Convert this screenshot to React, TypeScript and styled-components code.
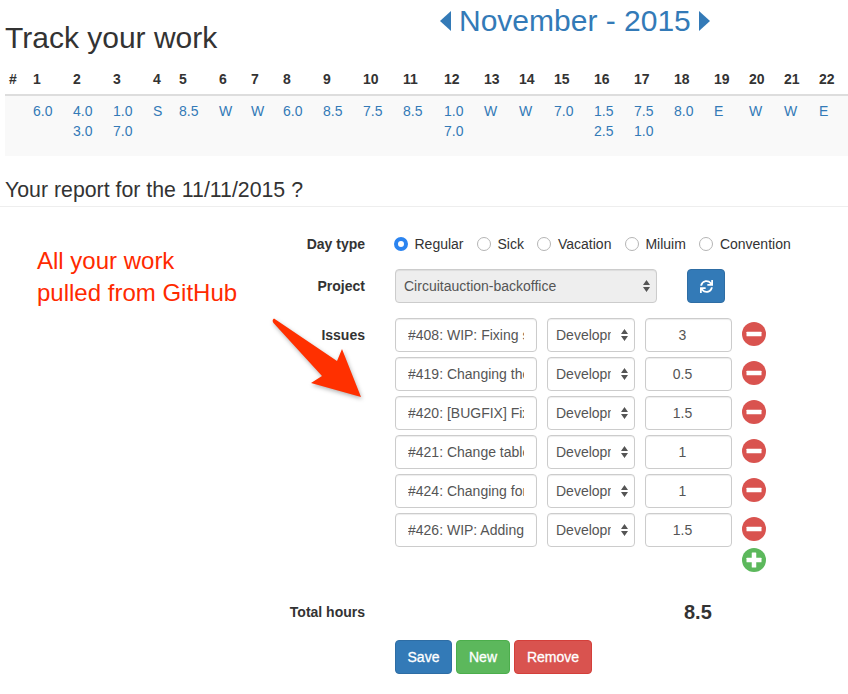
import React from 'react';
import styled, { createGlobalStyle } from 'styled-components';
import { FaSync } from 'react-icons/fa';

const GlobalStyle = createGlobalStyle`
   html, body {
      margin: 0;
      padding: 0;
      background: #fff;
      overflow: hidden;
   }
   body {
      font-family: "Liberation Sans", Arial, sans-serif;
      font-size: 14px;
      line-height: 20px;
      color: #333;
   }
   * { box-sizing: border-box; }
`;

const days = [
   { n: '1', w: 40, v: ['6.0'] },
   { n: '2', w: 40, v: ['4.0', '3.0'] },
   { n: '3', w: 40, v: ['1.0', '7.0'] },
   { n: '4', w: 26, v: ['S'] },
   { n: '5', w: 40, v: ['8.5'] },
   { n: '6', w: 32, v: ['W'] },
   { n: '7', w: 32, v: ['W'] },
   { n: '8', w: 40, v: ['6.0'] },
   { n: '9', w: 40, v: ['8.5'] },
   { n: '10', w: 40, v: ['7.5'] },
   { n: '11', w: 41, v: ['8.5'] },
   { n: '12', w: 40, v: ['1.0', '7.0'] },
   { n: '13', w: 35, v: ['W'] },
   { n: '14', w: 35, v: ['W'] },
   { n: '15', w: 40, v: ['7.0'] },
   { n: '16', w: 40, v: ['1.5', '2.5'] },
   { n: '17', w: 40, v: ['7.5', '1.0'] },
   { n: '18', w: 40, v: ['8.0'] },
   { n: '19', w: 35, v: ['E'] },
   { n: '20', w: 35, v: ['W'] },
   { n: '21', w: 35, v: ['W'] },
   { n: '22', w: 35, v: ['E'] },
];

const dayTypes = ['Regular', 'Sick', 'Vacation', 'Miluim', 'Convention'];

const issues = [
   { title: '#408: WIP: Fixing some of the tests', hours: '3' },
   { title: '#419: Changing the filters', hours: '0.5' },
   { title: '#420: [BUGFIX] Fix the item page', hours: '1.5' },
   { title: '#421: Change table layout', hours: '1' },
   { title: '#424: Changing form labels', hours: '1' },
   { title: '#426: WIP: Adding new report', hours: '1.5' },
];

const carets = encodeURIComponent(
   '<svg xmlns="http://www.w3.org/2000/svg" width="7" height="12"><path d="M3.5 0L7 5H0zM3.5 12L0 7h7z" fill="#555"/></svg>'
);

export default function App() {
   return (
      <Page>
         <GlobalStyle />
         <TitleRow>
            <Title>Track your work</Title>
            <Month>
               <Triangle viewBox="0 0 11 20"><path d="M11 0v20L0 10z" /></Triangle>
               <span>November - 2015</span>
               <Triangle viewBox="0 0 11 20"><path d="M0 0v20l11-10z" /></Triangle>
            </Month>
         </TitleRow>

         <Calendar>
            <colgroup>
               <col width={24} />
               {days.map((d) => <col key={d.n} width={d.w} />)}
            </colgroup>
            <thead>
               <tr>
                  <HeadCell>#</HeadCell>
                  {days.map((d) => <HeadCell key={d.n}>{d.n}</HeadCell>)}
               </tr>
            </thead>
            <tbody>
               <tr>
                  <DataCell />
                  {days.map((d) => (
                     <DataCell key={d.n}>
                        {d.v.map((v) => <DayLink key={v}>{v}</DayLink>)}
                     </DataCell>
                  ))}
               </tr>
            </tbody>
         </Calendar>

         <ReportTitle>Your report for the 11/11/2015 ?</ReportTitle>

         <Form>
            <Note>All your work<br />pulled from GitHub</Note>
            <Arrow viewBox="0 0 110 100">
               <path d="M3 3.5L66 46 L71 34 L90 82 L40 68 L51 61 L2.5 8 Q0.5 5 3 3.5Z" />
            </Arrow>

            <DayRow>
               <Label>Day type</Label>
               <Radios>
                  {dayTypes.map((t, i) => (
                     <RadioLabel key={t}>
                        <Radio type="radio" name="dayType" defaultChecked={i === 0} />
                        {t}
                     </RadioLabel>
                  ))}
               </Radios>
            </DayRow>

            <ProjectRow>
               <Label>Project</Label>
               <ProjectSelect disabled defaultValue="backoffice">
                  <option value="backoffice">Circuitauction-backoffice</option>
               </ProjectSelect>
               <RefreshButton type="button"><FaSync size={13} /></RefreshButton>
            </ProjectRow>

            <IssuesRow>
               <IssuesLabel>Issues</IssuesLabel>
               <IssueList>
                  {issues.map((issue) => (
                     <IssueRow key={issue.title}>
                        <TitleInput defaultValue={issue.title} />
                        <TypeSelect defaultValue="dev">
                           <option value="dev">Development</option>
                        </TypeSelect>
                        <HoursInput defaultValue={issue.hours} />
                        <RoundIcon viewBox="0 0 24 24" $color="#d9534f">
                           <circle cx="12" cy="12" r="12" />
                           <rect x="4.5" y="9.75" width="15" height="4.5" rx="0.6" fill="#fff" />
                        </RoundIcon>
                     </IssueRow>
                  ))}
                  <AddRow>
                     <RoundIcon viewBox="0 0 24 24" $color="#5cb85c">
                        <circle cx="12" cy="12" r="12" />
                        <rect x="4.5" y="9.75" width="15" height="4.5" rx="0.6" fill="#fff" />
                        <rect x="9.75" y="4.5" width="4.5" height="15" rx="0.6" fill="#fff" />
                     </RoundIcon>
                  </AddRow>
               </IssueList>
            </IssuesRow>

            <TotalRow>
               <Label>Total hours</Label>
               <TotalValue>8.5</TotalValue>
            </TotalRow>

            <Actions>
               <Button type="button" $w={57} $bg="#337ab7" $border="#2e6da4">Save</Button>
               <Button type="button" $w={54} $bg="#5cb85c" $border="#4cae4c">New</Button>
               <Button type="button" $w={78} $bg="#d9534f" $border="#d43f3a">Remove</Button>
            </Actions>
         </Form>
      </Page>
   );
}

const Page = styled.div`
   width: 848px;
   height: 694px;
   padding-left: 5px;
   overflow: hidden;
`;

const TitleRow = styled.div`
   display: flex;
   align-items: flex-start;
   height: 68px;
`;

const Title = styled.h1`
   margin: 21px 0 0;
   width: 435px;
   font-size: 30px;
   line-height: 33px;
   font-weight: 400;
`;

const Month = styled.div`
   display: flex;
   align-items: center;
   gap: 8px;
   margin-top: 4px;
   font-size: 30px;
   line-height: 33px;
   color: #337ab7;
`;

const Triangle = styled.svg`
   width: 11px;
   height: 20px;
   fill: #337ab7;
`;

const Calendar = styled.table`
   table-layout: fixed;
   width: 845px;
   border-collapse: collapse;
`;

const HeadCell = styled.th`
   padding: 1px 0 5px 4px;
   text-align: left;
   font-weight: 700;
   line-height: 20px;
   border-bottom: 2px solid #ddd;
`;

const DataCell = styled.td`
   height: 61px;
   padding: 5px 0 14px 4px;
   vertical-align: top;
   background: #f9f9f9;
`;

const DayLink = styled.a`
   display: block;
   color: #337ab7;
`;

const ReportTitle = styled.h3`
   margin: 23px 0 0 -5px;
   padding: 0 0 5px 5px;
   height: 28px;
   font-size: 21.3px;
   line-height: 22px;
   font-weight: 400;
   border-bottom: 1px solid #eee;
`;

const Form = styled.form`
   position: relative;
   padding-top: 27px;
`;

const Note = styled.div`
   position: absolute;
   left: 32px;
   top: 38px;
   font-size: 24px;
   line-height: 32px;
   color: #ff2a00;
`;

const Arrow = styled.svg`
   position: absolute;
   left: 266px;
   top: 108px;
   width: 110px;
   height: 100px;
   fill: #ff3000;
   filter: drop-shadow(1px 2px 2px rgba(0, 0, 0, 0.3));
`;

const Label = styled.label`
   flex: none;
   width: 360px;
   margin-right: 30px;
   text-align: right;
   font-weight: 700;
`;

const IssuesLabel = styled(Label)`
   padding-top: 7px;
`;

const DayRow = styled.div`
   display: flex;
   height: 20px;
   margin-bottom: 15px;
`;

const Radios = styled.div`
   display: flex;
   gap: 13.5px;
   margin-left: -1px;
`;

const RadioLabel = styled.label`
   display: flex;
   align-items: center;
   gap: 6.5px;
`;

const Radio = styled.input`
   appearance: none;
   margin: 0;
   width: 14px;
   height: 14px;
   border-radius: 50%;
   border: 1px solid #b5b5b5;
   background: #fff;
   &:checked {
      border: 4.5px solid #2b84f0;
      background: #fff;
   }
`;

const ProjectRow = styled.div`
   display: flex;
   align-items: center;
   height: 34px;
   margin-bottom: 15px;
`;

const fieldBase = `
   height: 34px;
   margin: 0;
   border: 1px solid #ccc;
   border-radius: 4px;
   font-family: inherit;
   font-size: 14px;
   color: #555;
   outline: none;
   box-shadow: inset 0 1px 1px rgba(0, 0, 0, 0.075);
`;

const selectBase = `
   ${fieldBase}
   appearance: none;
   background-image: url("data:image/svg+xml,${carets}");
   background-repeat: no-repeat;
   background-color: #fff;
   background-position: right 6px center;
`;

const ProjectSelect = styled.select`
   ${selectBase}
   width: 262px;
   padding: 0 24px 0 8px;
   background-color: #eee;
   opacity: 1;
`;

const RefreshButton = styled.button`
   display: flex;
   align-items: center;
   justify-content: center;
   width: 38px;
   height: 34px;
   margin-left: 30px;
   padding: 0;
   color: #fff;
   background: #337ab7;
   border: 1px solid #2e6da4;
   border-radius: 4px;
`;

const IssuesRow = styled.div`
   display: flex;
`;

const IssueList = styled.div`
   display: flex;
   flex-direction: column;
`;

const IssueRow = styled.div`
   display: flex;
   align-items: flex-start;
   gap: 10px;
   margin-bottom: 5px;
`;

const TitleInput = styled.input`
   ${fieldBase}
   width: 142px;
   padding: 0 12px;
`;

const TypeSelect = styled.select`
   ${selectBase}
   width: 88px;
   padding: 0 23px 0 8px;
`;

const HoursInput = styled.input`
   ${fieldBase}
   width: 87px;
   padding: 0 24px 0 12px;
   text-align: center;
`;

const RoundIcon = styled.svg<{ $color: string }>`
   flex: none;
   width: 24px;
   height: 24px;
   margin-top: 4px;
   fill: ${(p) => p.$color};
`;

const AddRow = styled.div`
   display: flex;
   height: 24px;
   margin-left: 347px;
   margin-top: -8px;
`;

const TotalRow = styled.div`
   display: flex;
   align-items: center;
   height: 20px;
   margin-top: 34px;
`;

const TotalValue = styled.div`
   margin-left: 289px;
   font-size: 20px;
   font-weight: 700;
`;

const Actions = styled.div`
   display: flex;
   gap: 4px;
   margin: 18px 0 0 390px;
`;

const Button = styled.button<{ $w: number; $bg: string; $border: string }>`
   width: ${(p) => p.$w}px;
   height: 34px;
   padding: 0;
   font-family: inherit;
   font-size: 14px;
   color: #fff;
   -webkit-text-stroke: 0.3px #fff;
   background: ${(p) => p.$bg};
   border: 1px solid ${(p) => p.$border};
   border-radius: 4px;
`;
